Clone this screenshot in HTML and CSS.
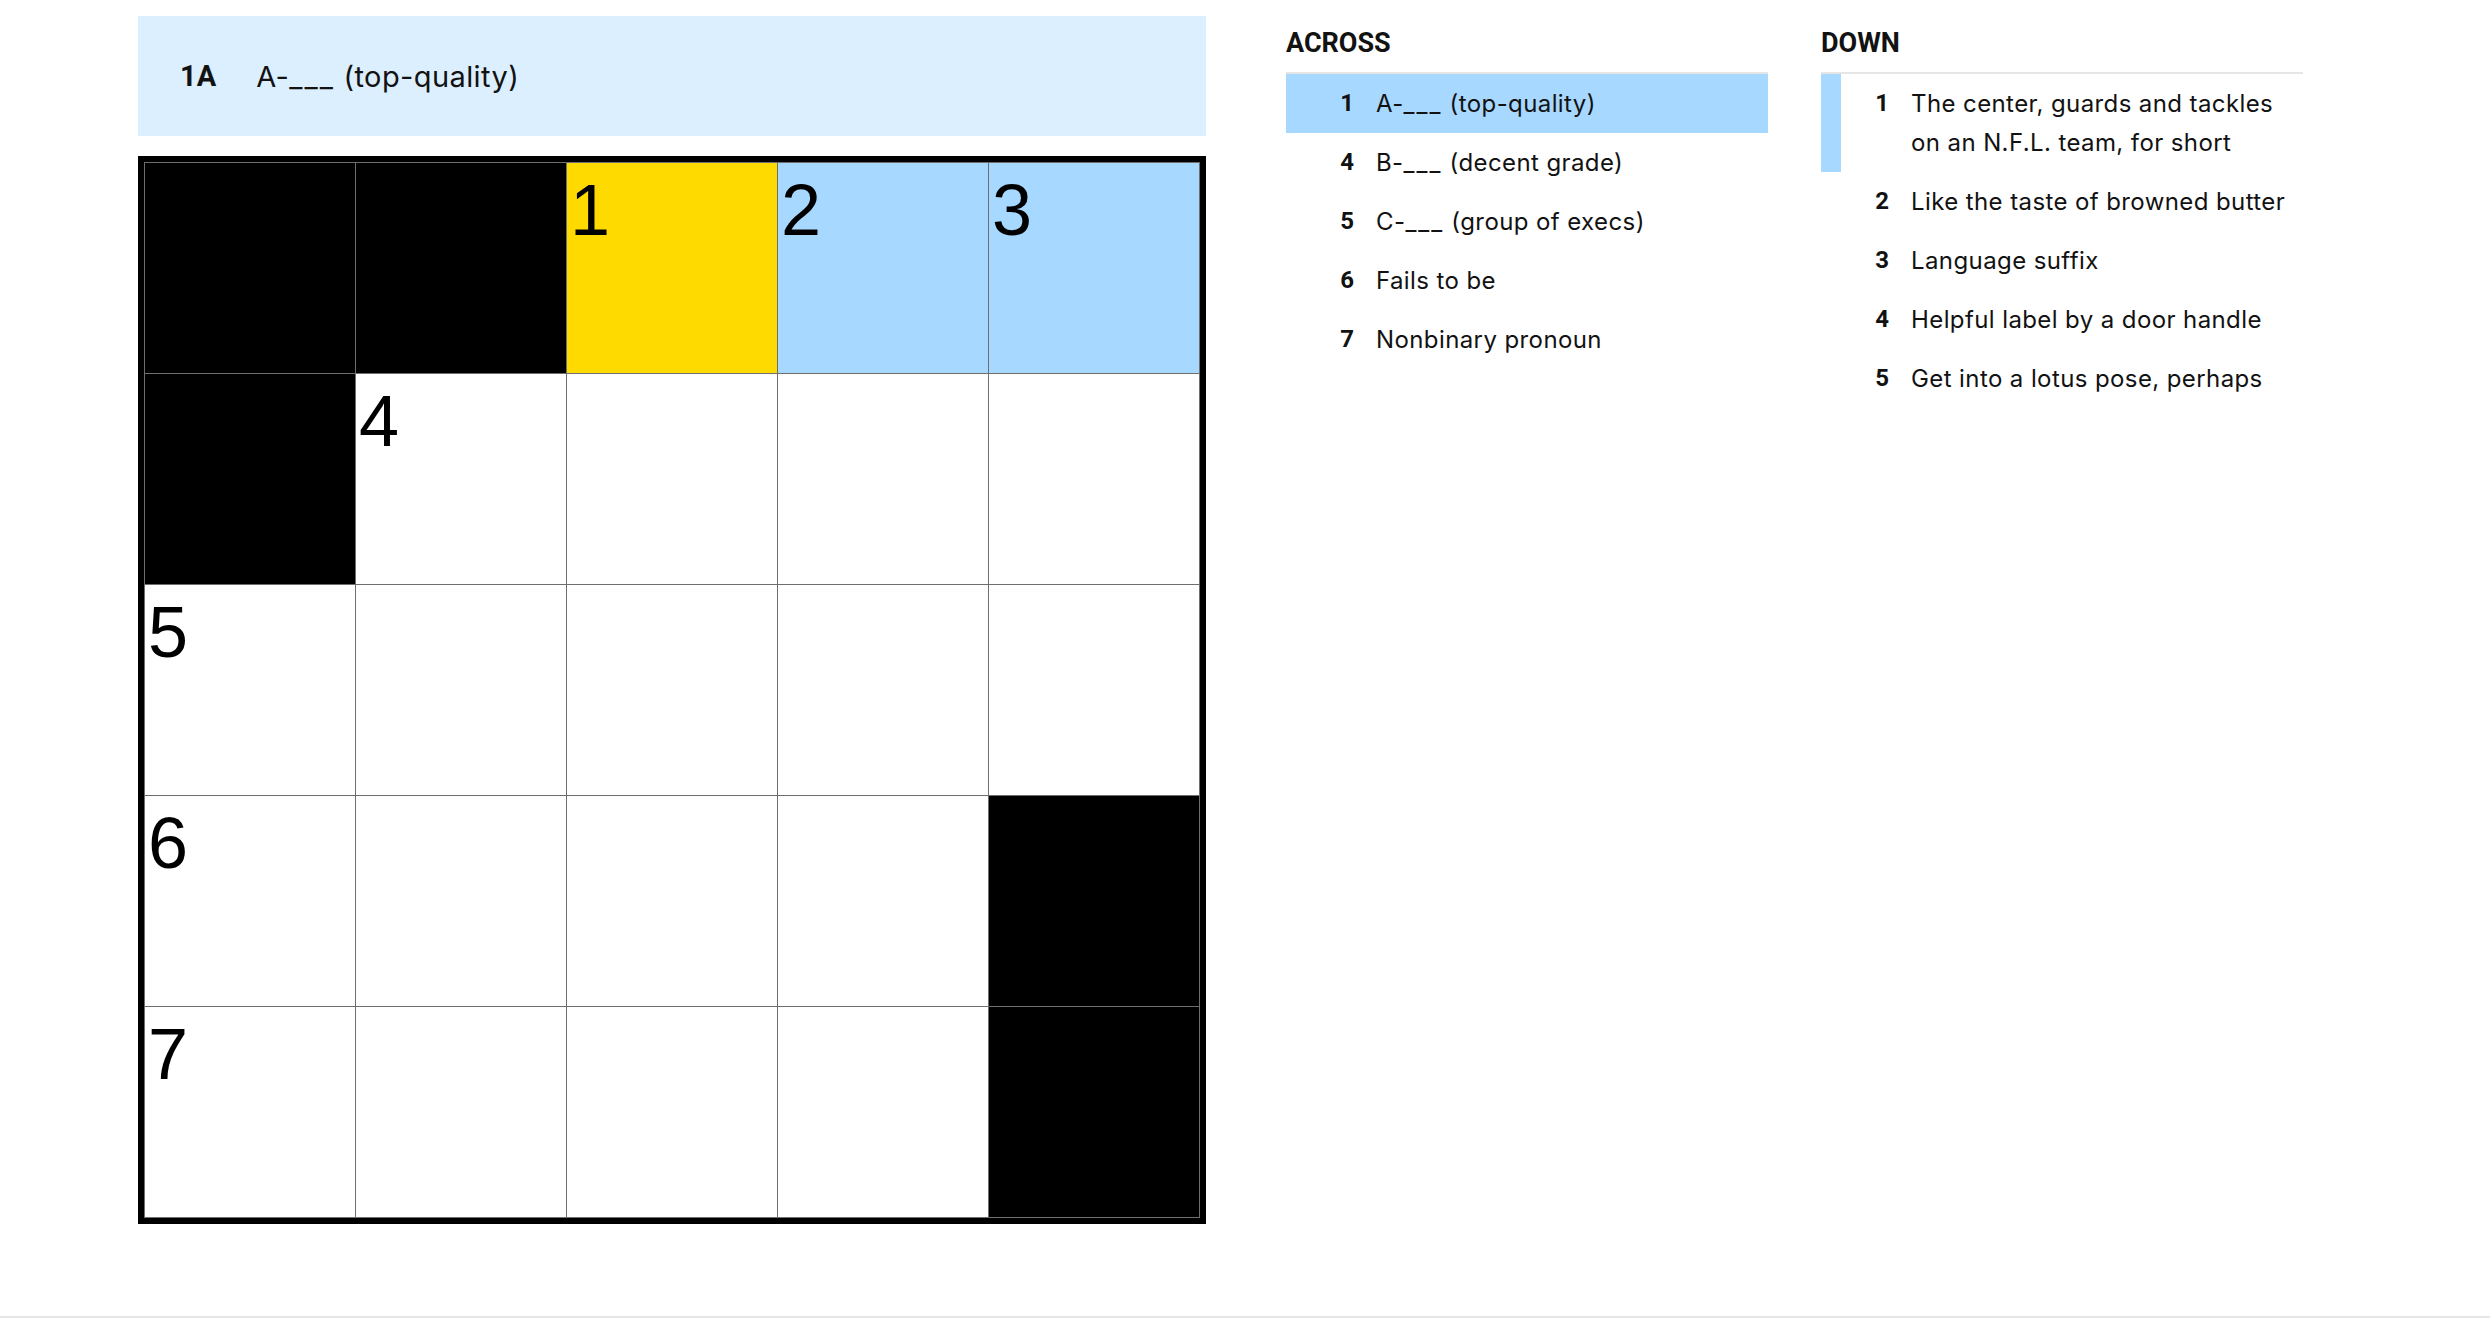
FILE: index.html
```html
<!DOCTYPE html>
<html lang="en">
<head>
    <meta charset="UTF-8">
    <meta name="viewport" content="width=device-width, initial-scale=1.0">
    <title>The Mini Crossword</title>
    <link rel="stylesheet" href="styles.css">
</head>
<body>
    <div class="page">
        <div class="board">
            <div class="clue-bar">
                <span class="clue-bar-label">1A</span>
                <span class="clue-bar-text">A-<span class="blank">___</span> (top-quality)</span>
            </div>
            <div class="grid">
                <div class="cell block"></div>
                <div class="cell block"></div>
                <div class="cell selected"><span class="num">1</span></div>
                <div class="cell word"><span class="num">2</span></div>
                <div class="cell word"><span class="num">3</span></div>

                <div class="cell block"></div>
                <div class="cell"><span class="num">4</span></div>
                <div class="cell"></div>
                <div class="cell"></div>
                <div class="cell"></div>

                <div class="cell"><span class="num">5</span></div>
                <div class="cell"></div>
                <div class="cell"></div>
                <div class="cell"></div>
                <div class="cell"></div>

                <div class="cell"><span class="num">6</span></div>
                <div class="cell"></div>
                <div class="cell"></div>
                <div class="cell"></div>
                <div class="cell block"></div>

                <div class="cell"><span class="num">7</span></div>
                <div class="cell"></div>
                <div class="cell"></div>
                <div class="cell"></div>
                <div class="cell block"></div>
            </div>
        </div>
        <div class="clues">
            <div class="clue-list">
                <h3 class="clue-title">Across</h3>
                <ol>
                    <li class="active"><span class="label">1</span><span class="text">A-<span class="blank">___</span> (top-quality)</span></li>
                    <li><span class="label">4</span><span class="text">B-<span class="blank">___</span> (decent grade)</span></li>
                    <li><span class="label">5</span><span class="text">C-<span class="blank">___</span> (group of execs)</span></li>
                    <li><span class="label">6</span><span class="text">Fails to be</span></li>
                    <li><span class="label">7</span><span class="text">Nonbinary pronoun</span></li>
                </ol>
            </div>
            <div class="clue-list">
                <h3 class="clue-title">Down</h3>
                <ol>
                    <li class="related"><span class="label">1</span><span class="text">The center, guards and tackles on an N.F.L. team, for short</span></li>
                    <li><span class="label">2</span><span class="text">Like the taste of browned butter</span></li>
                    <li><span class="label">3</span><span class="text">Language suffix</span></li>
                    <li><span class="label">4</span><span class="text">Helpful label by a door handle</span></li>
                    <li><span class="label">5</span><span class="text">Get into a lotus pose, perhaps</span></li>
                </ol>
            </div>
        </div>
    </div>
    <div class="footer-line"></div>
</body>
</html>
```

FILE: styles.css
```css
* {
    box-sizing: border-box;
    margin: 0;
    padding: 0;
}
body {
    height: 100vh;
    display: flex;
    flex-direction: column;
    background: #fff;
    color: #121212;
    font-family: Inter, Roboto, sans-serif;
    overflow: hidden;
}
.page {
    flex: 1;
    display: flex;
    gap: 80px;
    padding: 16px 0 0 138px;
}
.footer-line {
    height: 2px;
    background: #e6e6e6;
}

/* board: current clue + grid */
.board {
    width: 1068px;
    display: flex;
    flex-direction: column;
    gap: 20px;
}
.clue-bar {
    height: 120px;
    display: flex;
    align-items: center;
    padding-left: 42px;
    background: #dcefff;
    font-size: 29px;
}
.clue-bar-label {
    font-family: Roboto, sans-serif;
    font-weight: bold;
    margin-right: 40px;
}
.clue-bar-text {
    letter-spacing: 0.4px;
}
.blank {
    letter-spacing: 2px;
}
.grid {
    display: grid;
    grid-template-columns: repeat(5, 210px);
    grid-auto-rows: 210px;
    gap: 1px;
    padding: 1px;
    border: 6px solid #000;
    background: #6e6e6e;
    width: 1068px;
}
.cell {
    background: #fff;
    padding: 11px 0 0 3px;
}
.cell.block {
    background: #000;
}
.cell.selected {
    background: #ffda00;
}
.cell.word {
    background: #a7d8ff;
}
.num {
    display: block;
    font-family: "Liberation Sans", Arial, sans-serif;
    font-size: 72px;
    line-height: 72px;
    color: #000;
}

/* clue lists */
.clues {
    display: flex;
    gap: 53px;
}
.clue-list {
    width: 482px;
    padding-top: 11px;
}
.clue-title {
    font-family: Roboto, sans-serif;
    font-size: 27px;
    line-height: 32px;
    font-weight: bold;
    text-transform: uppercase;
    padding-bottom: 13px;
    border-bottom: 2px solid #e6e6e6;
}
ol {
    list-style: none;
}
li {
    display: flex;
    font-size: 24px;
    line-height: 39px;
    padding: 10px 10px 10px 14px;
    border-left: 20px solid transparent;
}
li.active {
    background: #a7d8ff;
}
li.related {
    border-left-color: #a7d8ff;
}
.text {
    letter-spacing: 0.4px;
}
.label {
    flex: none;
    width: 34px;
    text-align: right;
    margin-right: 22px;
    font-family: Roboto, sans-serif;
    font-weight: bold;
}
```
